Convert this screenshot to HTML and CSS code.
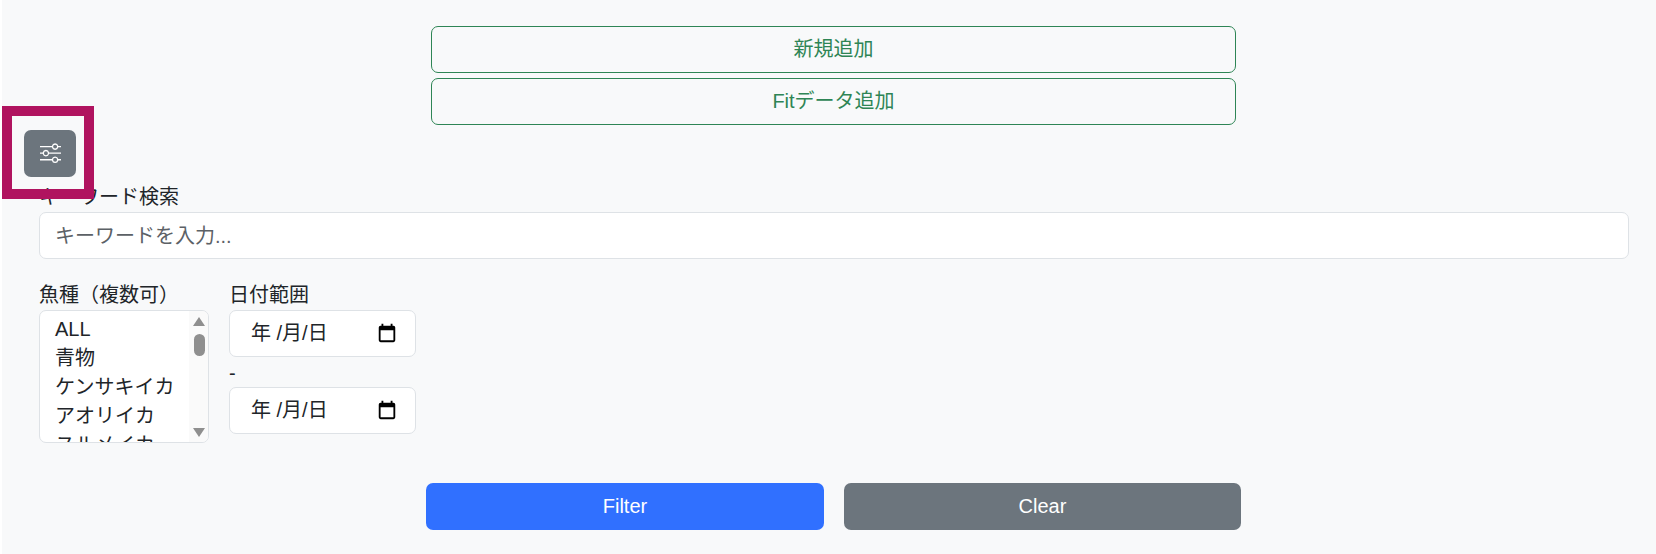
FILE: index.html
```html
<!DOCTYPE html>
<html lang="ja">
<head>
<meta charset="utf-8">
<title>Filter</title>
<link rel="stylesheet" href="styles.css">
</head>
<body>
<main class="page">
  <div class="add-group">
    <button class="btn-add">新規追加</button>
    <button class="btn-add">Fitデータ追加</button>
  </div>
  <div class="toggle-row">
    <button class="btn-toggle" aria-label="フィルタ">
      <svg width="21" height="21" viewBox="0 0 16 16" fill="#fff"><path fill-rule="evenodd" d="M11.5 2a1.5 1.5 0 1 0 0 3 1.5 1.5 0 0 0 0-3M9.05 3a2.5 2.5 0 0 1 4.9 0H16v1h-2.05a2.5 2.5 0 0 1-4.9 0H0V3zM4.5 7a1.5 1.5 0 1 0 0 3 1.5 1.5 0 0 0 0-3M2.05 8a2.5 2.5 0 0 1 4.9 0H16v1H6.95a2.5 2.5 0 0 1-4.9 0H0V8zm9.45 4a1.5 1.5 0 1 0 0 3 1.5 1.5 0 0 0 0-3m-2.45 1a2.5 2.5 0 0 1 4.9 0H16v1h-2.05a2.5 2.5 0 0 1-4.9 0H0v-1z"/></svg>
    </button>
    <span class="highlight"></span>
  </div>
  <section class="filters">
    <label class="label">キーワード検索</label>
    <div class="input keyword">キーワードを入力...</div>
    <div class="fields">
      <div class="field-species">
        <label class="label">魚種（複数可）</label>
        <div class="species">
          <ul class="species-list">
            <li>ALL</li>
            <li>青物</li>
            <li>ケンサキイカ</li>
            <li>アオリイカ</li>
            <li>スルメイカ</li>
          </ul>
          <div class="scrollbar">
            <span class="arrow-up"></span>
            <span class="thumb"></span>
            <span class="arrow-down"></span>
          </div>
        </div>
      </div>
      <div class="field-date">
        <label class="label">日付範囲</label>
        <div class="input date"><span>年 /月/日</span><svg width="22" height="22" viewBox="0 0 24 24"><path d="M19 4h-1V2h-2v2H8V2H6v2H5a2 2 0 0 0-2 2v14a2 2 0 0 0 2 2h14a2 2 0 0 0 2-2V6a2 2 0 0 0-2-2zm0 16H5V9h14z"/></svg></div>
        <div class="dash">-</div>
        <div class="input date"><span>年 /月/日</span><svg width="22" height="22" viewBox="0 0 24 24"><path d="M19 4h-1V2h-2v2H8V2H6v2H5a2 2 0 0 0-2 2v14a2 2 0 0 0 2 2h14a2 2 0 0 0 2-2V6a2 2 0 0 0-2-2zm0 16H5V9h14z"/></svg></div>
      </div>
    </div>
    <div class="actions">
      <button class="btn-action primary">Filter</button>
      <button class="btn-action secondary">Clear</button>
    </div>
  </section>
</main>
</body>
</html>
```
FILE: styles.css
```css
* { box-sizing: border-box; }
html, body { margin: 0; height: 100%; }
body {
  background: #f8f9fa;
  box-shadow: inset 2px 0 0 #fff;
  color: #212529;
  font-family: "Liberation Sans", "Noto Sans CJK JP", sans-serif;
  font-size: 20px;
  line-height: 1.5;
  overflow: hidden;
}
.page { padding: 26px 0 0 0; }
.add-group {
  width: 805px;
  margin-left: 431px;
  display: flex;
  flex-direction: column;
  gap: 5px;
}
.btn-add {
  height: 47px;
  padding: 0 0 2px;
  background: transparent;
  border: 1px solid #2e8555;
  border-radius: 7px;
  color: #2e8555;
  font: inherit;
}
.toggle-row {
  position: relative;
  margin: 5px 0 0 24px;
  width: 52px;
}
.btn-toggle {
  display: flex;
  align-items: center;
  justify-content: center;
  width: 52px;
  height: 47px;
  background: #6c757d;
  border: 0;
  border-radius: 7px;
  padding: 0 0 2px;
}
.highlight {
  position: absolute;
  left: -22px;
  top: -24px;
  width: 92px;
  height: 93px;
  border: 10px solid #b0135f;
}
.filters { padding: 6px 27px 0 39px; }
.label { display: block; height: 29px; line-height: 29px; }
.input {
  background: #fff;
  border: 1px solid #dee2e6;
  border-radius: 7px;
  height: 47px;
  padding: 0 15px;
  display: flex;
  align-items: center;
}
.keyword { color: #5c6166; }
.fields { display: flex; gap: 20px; margin-top: 22px; }
.field-species { width: 170px; }
.species {
  display: flex;
  width: 170px;
  height: 133px;
  background: #fff;
  border: 1px solid #dee2e6;
  border-radius: 7px;
  overflow: hidden;
}
.species-list {
  flex: 1;
  list-style: none;
  margin: 0;
  padding: 4px 0 0 15px;
  overflow: hidden;
}
.species-list li { height: 29px; line-height: 29px; }
.scrollbar {
  width: 19px;
  padding: 6px 0 5px 1px;
  background: #fafafa;
  display: flex;
  flex-direction: column;
  align-items: center;
}
.arrow-up, .arrow-down {
  width: 0;
  height: 0;
  border-left: 6.5px solid transparent;
  border-right: 6.5px solid transparent;
}
.arrow-up { border-bottom: 9px solid #8f8f8f; }
.arrow-down { border-top: 9px solid #8f8f8f; margin-top: auto; }
.thumb {
  width: 11px;
  height: 22px;
  margin-top: 8px;
  background: #8f8f8f;
  border-radius: 6px;
}
.field-date { width: 187px; }
.date { justify-content: space-between; padding: 0 17px 2px 21px; }
.dash { height: 30px; line-height: 33px; }
.actions {
  display: flex;
  gap: 20px;
  margin: 40px 0 0 387px;
}
.btn-action {
  height: 47px;
  padding: 0 0 2px;
  border: 0;
  border-radius: 7px;
  color: #fff;
  font: inherit;
}
.primary { background: #3070ff; width: 398px; }
.secondary { background: #6c757d; width: 397px; }
```
